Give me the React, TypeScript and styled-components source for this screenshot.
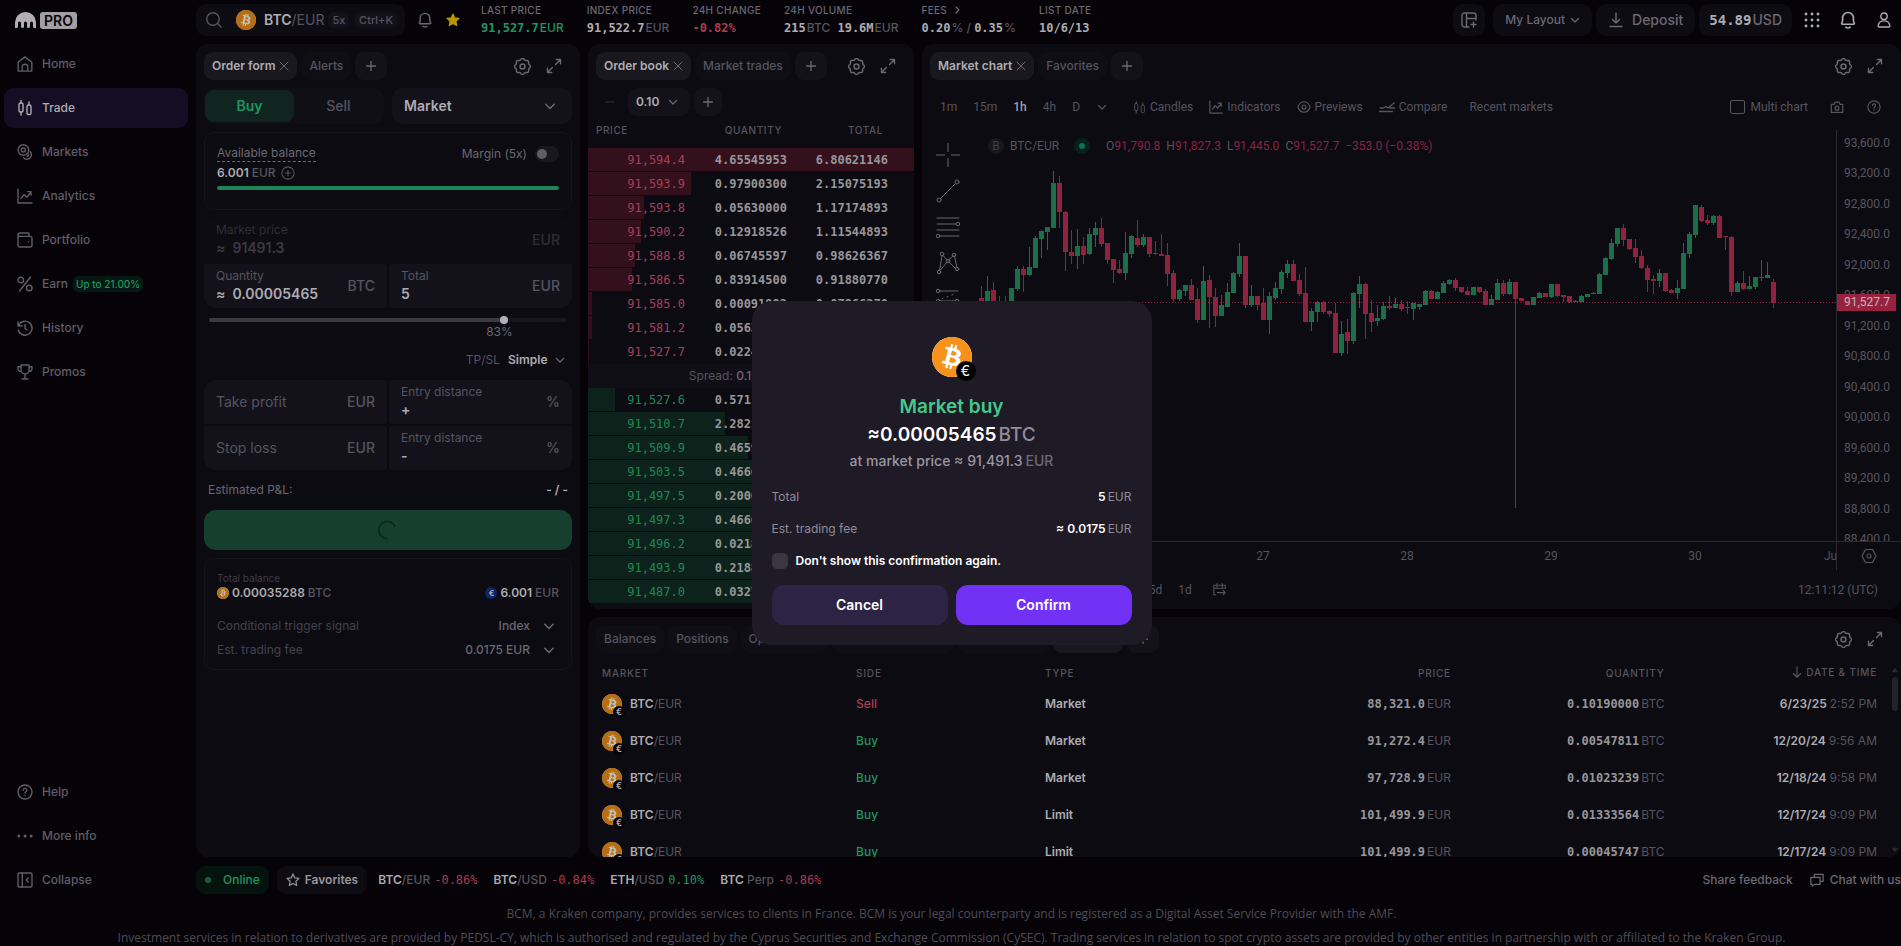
import React, { ReactNode } from 'react';
import styled, { createGlobalStyle, css } from 'styled-components';
import { SiBitcoin } from 'react-icons/si';

const c = {
  page: '#050308',
  panel: '#0c0b11',
  surface: '#13121a',
  raised: '#19181f',
  line: '#15141b',
  bright: '#aeacb1',
  mid: '#6a6873',
  dim: '#56545f',
  faint: '#2f2d36',
  green: '#1f9560',
  red: '#a93d50',
};
const sans = 'Inter, "Liberation Sans", sans-serif';
const mono = '"DejaVu Sans Mono", "Liberation Mono", monospace';
const chartFont = 'Roboto, "Open Sans", sans-serif';

const GlobalStyle = createGlobalStyle`
  *, *::before, *::after { box-sizing: border-box; }
  body { margin: 0; background: ${c.page}; color: ${c.mid}; font: 400 12px/16px ${sans}; overflow: hidden; }
  button, input, select { font: inherit; color: inherit; border: 0; padding: 0; margin: 0; background: none; outline: 0; min-width: 0; }
  a { color: inherit; text-decoration: none; }
  svg { display: block; flex: none; }
`;

/* ---------- icons ---------- */
const Icon = ({ d, size = 16, w = 1.4, vb = 16, children }: { d?: string; size?: number; w?: number; vb?: number; children?: ReactNode }) => (
  <svg width={size} height={size} viewBox={`0 0 ${vb} ${vb}`} fill="none" stroke="currentColor" strokeWidth={w} strokeLinecap="round" strokeLinejoin="round" aria-hidden>
    {d && <path d={d} />}
    {children}
  </svg>
);
const gearPath = Array.from({ length: 96 }, (_, i) => {
  const a = (i / 96) * Math.PI * 2;
  const r = 6.9 + 0.6 * Math.cos(8 * a);
  return `${i ? 'L' : 'M'}${(8 + r * Math.cos(a)).toFixed(2)} ${(8 + r * Math.sin(a)).toFixed(2)}`;
}).join('') + 'Z';
const Gear = () => <Icon d={gearPath} size={17}><circle cx="8" cy="8" r="2.3" /></Icon>;
const Expand = () => <Icon d="M10.3 1.5h4.2v4.2M14.2 1.8 9.6 6.4M5.7 14.5H1.5v-4.2M1.8 14.2l4.6-4.6" />;
const Chevron = ({ size = 10 }: { size?: number }) => <Icon size={size} vb={10} w={1.2} d="M1.5 3.5 5 7l3.5-3.5" />;
const Cross = () => <Icon size={10} vb={10} w={1} d="M1 1l8 8M9 1l-8 8" />;
const Plus = () => <Icon size={10} vb={10} w={1.3} d="M5 .5v9M.5 5h9" />;
const Minus = () => <Icon size={10} vb={10} w={1.2} d="M.5 5h9" />;
const Search = () => <Icon size={18} vb={18} d="M12.6 12.6 16 16"><circle cx="8" cy="8" r="6.2" /></Icon>;
const Bell = ({ size = 16 }: { size?: number }) => <Icon size={size} d="M3 11.8c-.6 0-.9-.6-.6-1.1.5-.9.8-1.9.8-3V6.2a4.8 4.8 0 0 1 9.6 0v1.5c0 1.1.3 2.1.8 3 .3.5 0 1.1-.6 1.1ZM6 14.4c1.2.8 2.8.8 4 0" />;
const StarIcon = ({ filled }: { filled?: boolean }) => (
  <svg width="14" height="14" viewBox="0 0 14 14" aria-hidden fill={filled ? '#b99700' : 'none'} stroke={filled ? '#b99700' : 'currentColor'} strokeWidth="1.2" strokeLinejoin="round">
    <path d="M7 1l1.8 3.9 4.2.5-3.1 2.9.8 4.2L7 10.4l-3.7 2.1.8-4.2L1 5.4l4.2-.5z" />
  </svg>
);
const HelpIcon = ({ size = 16 }: { size?: number }) => <Icon size={size} d="M6.2 6.2a1.8 1.8 0 1 1 2.6 1.6c-.5.3-.8.6-.8 1.2M8 11.3v.1"><circle cx="8" cy="8" r="7" /></Icon>;
const CandleIcon = ({ size = 16, w = 1.4 }: { size?: number; w?: number }) => (
  <Icon size={size} w={w} d="M4 0v3M4 12v3M12 2v2.5"><rect x="2" y="3" width="4" height="9" rx="1.6" /><rect x="10" y="5" width="4" height="9.5" rx="1.6" /></Icon>
);
const ChartIcon = ({ size = 16 }: { size?: number }) => <Icon size={size} d="M1 1v14h14M4 10.5l3-4 2.8 2.7L14 4M10.5 3.6H14v3.5" />;

const navIcons: Record<string, ReactNode> = {
  Home: <Icon d="M1.2 6.3 8 .9l6.8 5.4v8.8H1.2ZM5.2 15V11a2.8 2.8 0 0 1 5.6 0v4" />,
  Trade: <CandleIcon />,
  Markets: <Icon d="M13.2 7.6a4.4 4.4 0 1 1-6.6 6.2"><circle cx="6.4" cy="6" r="5.3" /><circle cx="6.4" cy="6" r="2" /><path d="M11.7 10.2a1.8 1.8 0 0 1-1.6 2" /></Icon>,
  Analytics: <ChartIcon />,
  Portfolio: <Icon d="M1 12.8V3.2C1 2 1.9 1 3.2 1h8.6v3.4M1 4.4h12c1.1 0 2 .9 2 2V13c0 1.1-.9 2-2 2H3a2 2 0 0 1-2-2ZM11.5 9.7v.1" />,
  Earn: <Icon d="M13.5 1 2.5 15"><circle cx="3.8" cy="4" r="2.8" /><circle cx="12.2" cy="12" r="2.8" /></Icon>,
  History: <Icon d="M1 2v4h4M1.4 6A7 7 0 1 1 1.3 10M8 4.5V8.5l2 1.5" />,
  Promos: <Icon d="M4 1h8v5a4 4 0 0 1-8 0ZM4 2.8H1v1.7C1 6.5 2.4 7.5 4.3 7.5M12 2.8h3v1.7c0 2-1.4 3-3.3 3M8 10v4.8M5 15h6" />,
  Help: <HelpIcon />,
  'More info': <Icon d="M1.8 8v0M8 8v0M14.2 8v0" w={3} />,
  Collapse: <Icon d="M5.3 1v14M11.2 6 9.5 8l1.7 2"><rect x="1" y="1" width="14" height="14" rx="1.5" /></Icon>,
};

const CoinWrap = styled.span<{ $size: number; $dim?: boolean }>`
  position: relative; display: block; flex: none;
  width: ${p => p.$size}px; height: ${p => p.$size}px;
  border-radius: 50%; background: ${p => (p.$dim ? '#c3bdb2' : '#fff')};
  color: ${p => (p.$dim ? '#b56e13' : '#f7931a')};
`;
const CoinBadge = styled.span<{ $big?: boolean }>`
  position: absolute; border-radius: 50%; background: #000; text-align: center; font-family: ${sans};
  ${p => (p.$big
    ? css`right: -4px; bottom: -4px; width: 20px; height: 20px; font-size: 14px; line-height: 20px; color: #fff;`
    : css`right: -3px; bottom: -4px; width: 12px; height: 12px; font-size: 9px; line-height: 12px; color: ${c.bright}; background: #050408;`)}
`;
const Coin = ({ size = 20, dim, badge }: { size?: number; dim?: boolean; badge?: boolean }) => (
  <CoinWrap $size={size} $dim={dim}>
    <SiBitcoin size={size} />
    {badge && <CoinBadge $big={size > 30}>€</CoinBadge>}
  </CoinWrap>
);

/* ---------- page frame ---------- */
const Upper = styled.div`display: flex; height: calc(100vh - 44px); min-height: 700px;`;
const Sidebar = styled.nav`width: 196px; flex: none; display: flex; flex-direction: column; padding: 0 8px 2px 4px;`;
const Brand = styled.a`display: flex; align-items: center; gap: 4px; height: 44px; padding: 0 0 4px 11px; color: #b1afb2;`;
const Pro = styled.span`background: #a19fa2; color: #050308; border-radius: 3px; height: 17px; padding: 0 4px; font: 600 14px/17px ${sans};`;
const NavItem = styled.a<{ $active?: boolean }>`
  display: flex; align-items: center; gap: 9px; height: 40px; margin-bottom: 4px; padding-left: 13px;
  border-radius: 10px; font-weight: 500; color: ${p => (p.$active ? c.bright : '#605d69')};
  background: ${p => (p.$active ? '#130e23' : 'transparent')};
  &:last-child { margin-bottom: 0; }
`;
const EarnTag = styled.span`margin-left: -4px; padding: 0 3px; border-radius: 5px; background: #051811; color: ${c.green}; font-size: 10px;`;
const NavSpace = styled.div`flex: 1;`;
const Content = styled.div`flex: 1; min-width: 0; display: flex; flex-direction: column;`;

/* ---------- top bar ---------- */
const TopBar = styled.header`display: flex; height: 44px; padding: 2px 9px 0 0; align-items: flex-start;`;
const PairSearch = styled.button`
  display: flex; align-items: center; height: 32px; margin-top: 2px; padding: 0 8px 0 9px; border-radius: 10px; background: #0e0c13; width: 209px; color: ${c.dim};
  > svg { margin-right: 13px; }
`;
const PairName = styled.span`margin: 0 4px 0 8px; font-size: 14px; color: ${c.dim}; b { font-weight: 600; color: ${c.bright}; }`;
const Chip = styled.span`border-radius: 5px; background: ${c.surface}; padding: 0 4px; font-size: 11px; font-weight: 500; &:last-child { margin-left: auto; }`;
const PlainButton = styled.button<{ $bright?: boolean }>`display: flex; align-items: center; justify-content: center; color: ${p => (p.$bright ? c.bright : c.mid)}; cursor: pointer;`;
const PairActions = styled.div`display: flex; gap: 13px; padding: 10px 21px 0 12px;`;
const Stats = styled.dl`display: flex; gap: 23px; margin: 0; flex: 1;`;
const Stat = styled.div``;
const StatLabel = styled.dt`display: flex; align-items: center; gap: 6px; font-size: 10px; font-weight: 500; color: ${c.mid}; letter-spacing: 0.03em; text-transform: uppercase; white-space: nowrap;`;
const StatValue = styled.dd<{ $tone?: string }>`
  margin: 2px 0 0; white-space: nowrap; font: 700 12px/16px ${mono}; color: ${p => p.$tone || c.bright};
  small { font: 500 12px/16px ${sans}; color: ${p => p.$tone || c.dim}; margin-left: 1px; }
`;
const TopActions = styled.div`display: flex; gap: 4px; margin-top: 2px;`;
const TopButton = styled.button<{ $kind?: 'icon' | 'large' | 'balance' }>`
  display: flex; align-items: center; justify-content: center; gap: ${p => (p.$kind === 'large' ? 8 : 5)}px; height: 32px; padding: 0 12px; border-radius: 10px; background: #0e0c13;
  font-weight: 500; font-size: ${p => (p.$kind === 'large' ? 14 : 12)}px; color: ${c.mid}; white-space: nowrap;
  ${p => p.$kind === 'icon' && css`width: 32px; padding: 0; margin-right: 4px;`}
  ${p => p.$kind === 'balance' && css`padding: 0 10px;`}
  b { font: 700 14px/16px ${mono}; color: ${c.bright}; }
  small { font: 500 14px/16px ${sans}; margin-left: -4px; }
`;
const TopIcons = styled.div`display: flex; gap: 19px; padding: 0 0 0 12px; align-items: center; height: 36px;`;

/* ---------- panels ---------- */
const Workspace = styled.main`
  flex: 1; min-height: 0; display: grid; gap: 8px;
  grid-template-columns: 384px 326px minmax(0, 1fr); grid-template-rows: minmax(0, 1fr) 240px;
`;
const Panel = styled.section<{ $area?: 'form' | 'history' }>`
  background: ${c.panel}; border-radius: 12px; overflow: hidden; display: flex; flex-direction: column; min-width: 0; min-height: 0;
  ${p => p.$area === 'form' && css`grid-row: 1 / 3;`}
  ${p => p.$area === 'history' && css`grid-column: 2 / 4;`}
`;
const TabBar = styled.div`display: flex; gap: 4px; padding: 8px 8px 0; flex: none;`;
const Tab = styled.button<{ $active?: boolean }>`
  display: flex; align-items: center; gap: 4px; height: 28px; padding: 0 8px; border-radius: 9px; white-space: nowrap;
  background: ${p => (p.$active ? c.raised : '#0f0e15')}; color: ${p => (p.$active ? c.bright : c.dim)}; font-weight: ${p => (p.$active ? 600 : 500)};
  svg { color: ${c.mid}; }
`;
const AddTab = styled(Tab)`width: 32px; justify-content: center; background: ${c.surface};`;
const PanelTools = styled.div`display: flex; gap: 15px; margin-left: auto; padding-right: 10px; align-items: center; color: ${c.mid};`;
const Tabs = ({ items, active }: { items: string[]; active: string }) => (
  <TabBar>
    {items.map(t => <Tab key={t} $active={t === active}>{t}{t === active && <Cross />}</Tab>)}
    <AddTab aria-label="Add tab"><Plus /></AddTab>
    <PanelTools>
      <PlainButton aria-label="Panel settings"><Gear /></PlainButton>
      <PlainButton aria-label="Expand panel"><Expand /></PlainButton>
    </PanelTools>
  </TabBar>
);

/* ---------- order form ---------- */
const Form = styled.form`display: flex; flex-direction: column; padding: 8px 8px 0;`;
const SideRow = styled.div`display: grid; grid-template-columns: 1fr 1fr; gap: 8px;`;
const SideSwitch = styled.div`display: grid; grid-template-columns: 1fr 1fr; height: 36px; padding: 2px 1px; border-radius: 10px; background: #100f16;`;
const SideButton = styled.button<{ $on?: boolean }>`
  border-radius: 9px; font-size: 14px; font-weight: ${p => (p.$on ? 600 : 500)};
  background: ${p => (p.$on ? '#10251f' : 'transparent')}; color: ${p => (p.$on ? c.green : c.dim)};
`;
const SelectWrap = styled.label<{ $kind?: 'large' | 'small' | 'plain' | 'quiet' }>`
  display: flex; align-items: center; position: relative; color: ${c.mid};
  select { appearance: none; cursor: pointer; }
  option { background: ${c.surface}; color: ${c.bright}; }
  ${p => p.$kind === 'large' && css`height: 36px; border-radius: 10px; background: ${c.surface}; padding: 0 16px 0 12px; select { flex: 1; font-size: 14px; font-weight: 600; color: ${c.bright}; }`}
  ${p => p.$kind === 'small' && css`height: 28px; border-radius: 9px; background: ${c.surface}; padding: 0 12px 0 8px; gap: 8px; select { font-weight: 600; color: ${c.bright}; }`}
  ${p => p.$kind === 'plain' && css`gap: 7px; select { font-weight: 600; color: ${c.bright}; }`}
  ${p => p.$kind === 'quiet' && css`gap: 13px; padding-right: 4px; select { font-weight: 500; color: ${c.mid}; text-align: right; }`}
`;
const Hidden = styled.span`position: absolute; width: 1px; height: 1px; overflow: hidden; clip-path: inset(50%);`;
const BalanceBox = styled.div`margin-top: 8px; height: 78px; border: 1px solid ${c.line}; border-radius: 10px; padding: 12px 12px 0;`;
const Row = styled.div<{ $top?: number }>`display: flex; align-items: center; justify-content: space-between; margin-top: ${p => p.$top || 0}px;`;
const Dashed = styled.span`border-bottom: 1px dashed ${c.mid};`;
const Amount = styled.span`
  display: flex; align-items: center; gap: 3px; color: ${c.dim}; font-weight: 500;
  b { font-weight: 600; color: ${c.bright}; }
  > svg { margin-left: 2px; }
`;
const ToggleLabel = styled.label`display: flex; align-items: center; gap: 8px;`;
const Toggle = styled.input`
  appearance: none; width: 24px; height: 16px; border-radius: 8px; background: ${c.raised};
  &::before { content: ''; display: block; width: 10px; height: 10px; margin: 3px 0 0 2px; border-radius: 50%; background: #605e66; }
`;
const Meter = styled.div`height: 4px; margin-top: 5px; border-radius: 2px; background: #1f8456;`;
const Fields = styled.div<{ $top: number }>`margin-top: ${p => p.$top}px; display: grid; grid-template-columns: 1fr 1fr; gap: 2px; border-radius: 12px; overflow: hidden;`;
const FieldBox = styled.label<{ $wide?: boolean; $muted?: boolean }>`
  display: grid; grid-template-columns: minmax(0, 1fr) auto; grid-template-rows: 16px 20px; align-items: center; height: 44px; padding: 4px 12px; border-radius: 3px;
  background: ${p => (p.$muted ? '#0d0c12' : c.surface)}; color: ${p => (p.$muted ? c.faint : c.dim)};
  ${p => p.$wide && css`grid-column: 1 / 3;`}
`;
const FieldUnit = styled.span`grid-column: 2; grid-row: 1 / 3; font-size: 14px; font-weight: 500;`;
const FieldValue = styled.span<{ $muted?: boolean; $tall?: boolean }>`
  display: flex; gap: 7px; font-size: 14px; font-weight: 600; color: ${p => (p.$muted ? '#3b3941' : c.bright)}; ${p => p.$tall && css`grid-row: 1 / 3;`}
  input { width: 100%; }
  input::placeholder { color: ${c.dim}; font-weight: 400; opacity: 1; }
`;
const Field = ({ label, value, unit, approx, wide, muted, bare }: { label: string; value?: string; unit: string; approx?: boolean; wide?: boolean; muted?: boolean; bare?: boolean }) => (
  <FieldBox $wide={wide} $muted={muted}>
    {!bare && <span>{label}</span>}
    <FieldValue $muted={muted} $tall={bare}>
      {approx && <span>≈</span>}
      <input defaultValue={value} placeholder={bare ? label : undefined} aria-label={bare ? label : undefined} disabled={muted} />
    </FieldValue>
    <FieldUnit>{unit}</FieldUnit>
  </FieldBox>
);
const SliderWrap = styled.div`margin: 10px 5px 0;`;
const Slider = styled.input`
  appearance: none; display: block; width: 100%; height: 4px; border-radius: 2px;
  background: linear-gradient(to right, #3b3943 83%, #17161d 83%);
  &::-webkit-slider-thumb { appearance: none; width: 8px; height: 8px; border-radius: 50%; background: #b2b1b5; }
`;
const SliderValue = styled.output`display: block; margin: 2px 0 0 calc(83% - 20px);`;
const TpRow = styled.div`display: flex; justify-content: flex-end; gap: 8px; padding: 0 7px; margin-top: 12px; color: ${c.dim};`;
const PnlRow = styled(Row)`padding: 0 4px; b { color: ${c.bright}; font-weight: 600; }`;
const Submit = styled.button`margin-top: 12px; height: 40px; border-radius: 12px; background: #15402f; display: flex; align-items: center; justify-content: center; color: #0a2418;`;
const SummaryBox = styled.div`margin-top: 8px; border: 1px solid ${c.line}; border-radius: 10px; padding: 12px 12px 11px;`;
const Tiny = styled.div`font-size: 10px; line-height: 14px; color: #3f3d47;`;
const EuroDot = styled.span`width: 12px; height: 12px; border-radius: 50%; background: #0a2568; color: ${c.bright}; font: 700 8px/12px ${sans}; text-align: center;`;
const SumLabel = styled.span`color: #44424d;`;

function OrderForm() {
  return (
    <Panel $area="form">
      <Tabs items={['Order form', 'Alerts']} active="Order form" />
      <Form onSubmit={e => e.preventDefault()}>
        <SideRow>
          <SideSwitch>
            <SideButton type="button" $on>Buy</SideButton>
            <SideButton type="button">Sell</SideButton>
          </SideSwitch>
          <SelectWrap $kind="large"><Hidden>Order type</Hidden><select><option>Market</option></select><Chevron size={12} /></SelectWrap>
        </SideRow>
        <BalanceBox>
          <Row>
            <Dashed>Available balance</Dashed>
            <ToggleLabel>Margin (5x)<Toggle type="checkbox" /></ToggleLabel>
          </Row>
          <Row $top={3}>
            <Amount><b>6.001</b>EUR<Icon size={14} w={1.2} d="M8 5v6M5 8h6"><circle cx="8" cy="8" r="7" /></Icon></Amount>
          </Row>
          <Meter />
        </BalanceBox>
        <Fields $top={8}>
          <Field label="Market price" value="91491.3" unit="EUR" approx wide muted />
          <Field label="Quantity" value="0.00005465" unit="BTC" approx />
          <Field label="Total" value="5" unit="EUR" />
        </Fields>
        <SliderWrap>
          <Slider type="range" min={0} max={100} defaultValue={83} aria-label="Share of balance" />
          <SliderValue>83%</SliderValue>
        </SliderWrap>
        <TpRow>TP/SL<SelectWrap $kind="plain"><Hidden>TP/SL mode</Hidden><select><option>Simple</option></select><Chevron /></SelectWrap></TpRow>
        <Fields $top={12}>
          <Field label="Take profit" unit="EUR" bare />
          <Field label="Entry distance" value="+" unit="%" />
          <Field label="Stop loss" unit="EUR" bare />
          <Field label="Entry distance" value="-" unit="%" />
        </Fields>
        <PnlRow $top={12}><span>Estimated P&amp;L:</span><b>- / -</b></PnlRow>
        <Submit type="submit" aria-label="Submitting order"><Icon size={20} vb={20} w={1.5} d="M17 6.5A8.5 8.5 0 1 0 9 18.4" /></Submit>
        <SummaryBox>
          <Tiny>Total balance</Tiny>
          <Row>
            <Amount><Coin size={12} dim /><b>0.00035288</b>BTC</Amount>
            <Amount><EuroDot>€</EuroDot><b>6.001</b>EUR</Amount>
          </Row>
          <Row $top={17}><SumLabel>Conditional trigger signal</SumLabel><SelectWrap $kind="quiet"><Hidden>Trigger signal</Hidden><select><option>Index</option></select><Chevron size={12} /></SelectWrap></Row>
          <Row $top={8}><SumLabel>Est. trading fee</SumLabel><SelectWrap $kind="quiet"><Hidden>Trading fee</Hidden><select><option>0.0175 EUR</option></select><Chevron size={12} /></SelectWrap></Row>
        </SummaryBox>
      </Form>
    </Panel>
  );
}

/* ---------- order book ---------- */
const BookTools = styled.div`display: flex; gap: 4px; padding: 8px 8px 0;`;
const StepButton = styled.button<{ $off?: boolean }>`width: 28px; height: 28px; border-radius: 9px; display: flex; align-items: center; justify-content: center; background: ${p => (p.$off ? 'transparent' : c.surface)}; color: ${p => (p.$off ? '#33313a' : c.mid)};`;
const BookTable = styled.table`
  width: 100%; border-collapse: collapse; table-layout: fixed;
  th { height: 32px; padding: 0 5px 4px 0; font-size: 10px; font-weight: 500; letter-spacing: 0.06em; color: ${c.dim}; text-align: right; }
  th:first-child { text-align: left; padding-left: 8px; }
  td { height: 24px; padding: 0; text-align: right; font: 700 12px/24px ${mono}; color: #98969a; }
`;
const BookRow = styled.tr<{ $tone: 'ask' | 'bid' }>`
  background-repeat: no-repeat;
  td:first-child { font-weight: 400; color: ${p => (p.$tone === 'ask' ? '#a83f59' : '#1e8858')}; }
`;
const SpreadRow = styled.tr`td { text-align: center; font: 400 12px/24px ${sans}; color: ${c.dim}; background: #100f17; b { font-weight: 500; color: ${c.mid}; } }`;
const asks: [string, string, string, number][] = [
  ['91,594.4', '4.65545953', '6.80621146', 100], ['91,593.9', '0.97900300', '2.15075193', 31.6], ['91,593.8', '0.05630000', '1.17174893', 17.3],
  ['91,590.2', '0.12918526', '1.11544893', 16.4], ['91,588.8', '0.06745597', '0.98626367', 14.5], ['91,586.5', '0.83914500', '0.91880770', 13.5],
  ['91,585.0', '0.00091992', '0.07966270', 1.2], ['91,581.2', '0.05630000', '0.07874278', 1.2], ['91,527.7', '0.02244278', '0.02244278', 0.3],
];
const bids: [string, string, string, number][] = [
  ['91,527.6', '0.57112000', '0.57112000', 8.3], ['91,510.7', '2.28210000', '2.85322000', 42], ['91,509.9', '0.46590000', '3.31912000', 49],
  ['91,503.5', '0.46660000', '3.78572000', 56], ['91,497.5', '0.20000000', '3.98572000', 59], ['91,497.3', '0.46660000', '4.45232000', 66],
  ['91,496.2', '0.02180000', '4.47412000', 66], ['91,493.9', '0.21880000', '4.69292000', 69], ['91,487.0', '0.03270000', '4.72562000', 70],
];
const depth = (color: string, pct: number) => ({ backgroundImage: `linear-gradient(${color}, ${color})`, backgroundSize: `${pct}% 23px` });

function OrderBook() {
  const rows = (list: typeof asks, tone: 'ask' | 'bid', color: string) => list.map(([p, q, t, pct]) => (
    <BookRow key={p} $tone={tone} style={depth(color, pct)}><td>{p}</td><td>{q}</td><td>{t}</td><td /></BookRow>
  ));
  return (
    <Panel>
      <Tabs items={['Order book', 'Market trades']} active="Order book" />
      <BookTools>
        <StepButton $off aria-label="Decrease grouping"><Minus /></StepButton>
        <SelectWrap $kind="small"><Hidden>Grouping</Hidden><select><option>0.10</option></select><Chevron /></SelectWrap>
        <StepButton aria-label="Increase grouping"><Plus /></StepButton>
      </BookTools>
      <BookTable>
        <colgroup><col width="97" /><col width="102" /><col width="101" /><col /></colgroup>
        <thead><tr><th>PRICE</th><th>QUANTITY</th><th>TOTAL</th><th aria-hidden /></tr></thead>
        <tbody>
          {rows(asks, 'ask', '#33101b')}
          <SpreadRow><td colSpan={4}>Spread: <b>0.1</b> (0.0001%)</td></SpreadRow>
          {rows(bids, 'bid', '#0c221b')}
        </tbody>
      </BookTable>
    </Panel>
  );
}

/* ---------- market chart ---------- */
const ChartBar = styled.div`display: flex; align-items: center; height: 50px; padding: 4px 12px 0 10px; font: 400 12px/16px ${chartFont}; color: ${c.dim};`;
const Tool = styled.button<{ $on?: boolean }>`
  display: flex; align-items: center; gap: 4px; height: 28px; padding: 0 8px; white-space: nowrap; color: ${p => (p.$on ? '#a19fa4' : c.dim)}; font-weight: ${p => (p.$on ? 500 : 400)};
`;
const BarGap = styled.span<{ $w: number }>`width: ${p => p.$w}px;`;
const Spring = styled.span`flex: 1;`;
const CheckLabel = styled.label`display: flex; align-items: center; gap: 5px; margin-right: 14px;`;
const BoxCheck = styled.input`appearance: none; width: 15px; height: 14px; border: 1px solid ${c.dim}; border-radius: 2px;`;
const ChartBody = styled.div`flex: 1; min-height: 0; display: grid; grid-template-columns: 52px minmax(0, 1fr) 65px; grid-template-rows: minmax(0, 1fr) 28px 39px; font: 400 12px/16px ${chartFont}; color: ${c.dim};`;
const DrawTools = styled.div`grid-row: 1 / 3; display: flex; flex-direction: column; align-items: center; gap: 12px; padding-top: 13px; color: #6b696f; overflow: hidden;`;
const Plot = styled.div`position: relative; overflow: hidden; border-bottom: 1px solid #2b2a30; svg { width: 100%; height: 100%; }`;
const Legend = styled.div`position: absolute; top: 6px; left: 14px; display: flex; align-items: center; gap: 6px; height: 20px; white-space: nowrap; i { font-style: normal; color: #8b2141; }`;
const SymbolDot = styled.span`width: 16px; height: 16px; border-radius: 50%; background: #18171c; color: #403f45; text-align: center;`;
const LiveDot = styled.span`width: 16px; height: 16px; margin: 0 10px 0 9px; border: 5px solid #06201a; border-radius: 50%; background: #08734f;`;
const Ohlc = styled.span`display: flex; gap: 6px;`;
const Axis = styled.div`position: relative; border-left: 1px solid #2b2a30; border-bottom: 1px solid #2b2a30; overflow: hidden; padding: 5px 0 0 7px;`;
const AxisLabel = styled.div`height: 30px; &:nth-child(even) { height: 31px; }`;
const LastTag = styled.div`position: absolute; left: -1px; top: 164px; width: 60px; height: 17px; padding-left: 8px; background: #97223f; color: #c3b6bb; line-height: 17px;`;
const TimeAxis = styled.div`overflow: hidden; display: flex; justify-content: flex-end; padding-top: 6px;`;
const DayLabel = styled.span`width: 144px; flex: none; text-align: center; &:last-child { width: 69px; padding-left: 57px; text-align: left; }`;
const AxisCorner = styled.div`border-left: 1px solid #2b2a30; display: flex; align-items: center; justify-content: center;`;
const RangeBar = styled.div`grid-column: 1 / 4; display: flex; align-items: center; justify-content: flex-end; padding: 0 23px 0 8px;`;
const Ranges = styled.div`display: flex; align-items: center; flex: 1; padding-left: 54px;`;

/* one entry per hourly candle: tone, high, low, body top, body bottom (thirds of a pixel) */
const candles = `R498,560,534,560 G468,560,513,550 R487,560,510,550 R528,560,548,560 R528,560,550,560 G504,550,504,550 G438,512,447,507 R438,516,447,465 G381,468,441,465 G349,444,354,444 G330,414,333,357 G321,390,321,336 G153,324,189,324 R168,324,189,276 R273,453,276,396 R330,432,396,408 G327,447,378,408 R351,432,378,405 G324,405,342,402 G306,381,324,345 R294,381,324,372 R369,432,369,420 R417,489,417,450 R420,462,447,459 G336,480,399,459 G345,414,348,402 R300,381,354,375 G342,381,351,375 R351,411,351,402 R363,405,399,402 R342,408,402,408 R369,498,405,462 R450,546,459,537 G507,543,510,537 G495,528,495,513 R477,540,495,540 R504,609,537,600 G438,600,483,600 R465,624,480,531 R504,621,531,588 G525,588,555,588 G489,561,516,561 G456,519,459,519 G369,471,408,462 R408,564,408,555 G495,561,528,555 R528,570,528,555 R504,600,549,600 G516,642,528,600 G486,540,504,534 G450,522,456,507 G420,474,432,459 R420,483,432,483 R462,528,480,522 R441,606,519,606 G564,633,573,606 G543,606,546,576 R543,582,546,576 R570,591,573,582 R549,699,579,699 G603,708,642,699 R597,702,636,663 G516,672,519,663 G468,564,492,522 R489,657,492,582 R540,636,579,606 G555,618,594,603 G546,600,558,597 R528,570,558,564 G534,564,552,564 R540,573,552,567 R543,582,561,564 G549,600,549,567 G552,570,552,561 G510,555,513,555 R510,537,513,537 G513,537,516,537 G483,519,489,519 G477,495,480,492 R474,513,480,504 R501,519,501,516 R501,525,513,525 G501,525,501,525 R501,519,501,516 R507,555,513,555 G525,555,537,555 G477,540,489,540 R480,528,489,522 G477,525,486,522 R486,1164,486,537 R534,543,534,543 R543,555,543,555 G531,555,531,555 G516,534,519,534 R519,531,519,531 G492,534,492,531 R492,531,492,528 R525,546,525,531 R528,549,528,546 G540,546,543,546 G525,546,528,546 G522,531,522,531 G516,522,519,522 G459,522,462,522 G411,465,414,465 G357,420,369,417 G324,381,324,372 R312,378,324,360 R357,390,357,387 R357,429,384,411 R390,447,408,444 R435,516,444,480 R465,522,477,483 G447,501,459,483 R459,516,459,513 R507,519,510,519 G480,537,504,519 G369,507,399,507 G336,414,342,402 G255,354,255,345 R255,306,261,303 R285,315,300,309 G285,315,288,309 R285,354,288,354 R348,390,348,351 R348,528,351,516 G483,516,489,516 R453,510,489,507 G468,507,498,507 G471,507,471,501 G420,483,471,474 G426,474,465,474 R477,564,486,549`
  .split(' ').map(s => ({ up: s[0] === 'G', v: s.slice(1).split(',').map(n => Math.round(Number(n) / 3) - 10) }));

const prices = ['93,600.0', '93,200.0', '92,800.0', '92,400.0', '92,000.0', '91,600.0', '91,200.0', '90,800.0', '90,400.0', '90,000.0', '89,600.0', '89,200.0', '88,800.0', '88,400.0'];

function MarketChart() {
  return (
    <Panel>
      <Tabs items={['Market chart', 'Favorites']} active="Market chart" />
      <ChartBar>
        {['1m', '15m', '1h', '4h', 'D'].map(t => <Tool key={t} $on={t === '1h'}>{t}</Tool>)}
        <BarGap $w={1} />
        <Tool aria-label="More intervals"><Chevron /></Tool>
        <BarGap $w={10} />
        <Tool><CandleIcon size={13} w={1.1} />Candles</Tool>
        <Tool><ChartIcon size={14} />Indicators</Tool>
        <Tool><Icon size={14} d="M1 8c3-8 11-8 14 0-3 8-11 8-14 0Z"><circle cx="8" cy="8" r="2.3" /></Icon>Previews</Tool>
        <Tool><Icon size={16} d="M.5 12.5h13M1 9h3.5L7 7.5l2 1.5L15 4M11 9h4.5" />Compare</Tool>
        <BarGap $w={6} />
        <Tool>Recent markets</Tool>
        <Spring />
        <CheckLabel><BoxCheck type="checkbox" />Multi chart</CheckLabel>
        <Tool aria-label="Take snapshot"><Icon size={14} d="M1.5 5h3l1.2-2.5h4.6L11.5 5h3v9.2h-13Z"><circle cx="8" cy="9.3" r="2.2" /></Icon></Tool>
        <BarGap $w={7} />
        <Tool aria-label="Chart help"><HelpIcon size={14} /></Tool>
      </ChartBar>
      <ChartBody>
        <DrawTools>
          <Icon size={24} vb={24} w={1} d="M12 .5v8M12 15.5v8M.5 12h8M15.5 12h8" />
          <Icon size={24} vb={24} w={1} d="M4.5 19.5 19.5 4.5"><circle cx="3" cy="21" r="2" /><circle cx="21" cy="3" r="2" /></Icon>
          <Icon size={24} vb={24} w={1} d="M1 3h22M1 9h19M1 15h22M4 21h19"><circle cx="22" cy="9" r="1.8" /><circle cx="2" cy="21" r="1.8" /></Icon>
          <Icon size={24} vb={24} w={1} d="M3.5 19.5 6 4.5M7 4.5l4 4.5M12.5 9 17 5M18.5 5l2.500 12M4.500 19 11 11M13 11l7 7"><circle cx="3" cy="21" r="1.8" /><circle cx="6" cy="3" r="1.8" /><circle cx="12" cy="10" r="1.8" /><circle cx="18" cy="4" r="1.8" /><circle cx="21" cy="18" r="1.8" /></Icon>
          <Icon size={24} vb={24} w={1} d="M4 4h18M4 14h15M6 12l1-1M11 10l1-.5M16 8l1-.5"><circle cx="2" cy="4" r="1.8" /><circle cx="2" cy="14" r="1.8" /><circle cx="21" cy="14" r="1.8" /></Icon>
        </DrawTools>
        <Plot>
          <svg viewBox="0 0 862 412" preserveAspectRatio="xMaxYMin slice" shapeRendering="crispEdges" aria-label="BTC/EUR hourly candles">
            {candles.map(({ up, v: [hi, lo, top, bot] }, i) => (
              <g key={i} fill={up ? '#1b6e47' : '#8f233d'}>
                <rect x={7 + 6 * i} y={hi} width={1} height={lo - hi} />
                <rect x={5 + 6 * i} y={top} width={5} height={Math.max(bot - top, 1)} />
              </g>
            ))}
            <path d="M0 172.5H862" stroke="#8f233d" strokeWidth="1" strokeDasharray="1 2" />
          </svg>
          <Legend>
            <SymbolDot>B</SymbolDot>BTC/EUR<LiveDot />
            <Ohlc><span>O<i>91,790.8</i></span><span>H<i>91,827.3</i></span><span>L<i>91,445.0</i></span><span>C<i>91,527.7</i></span><i>−353.0 (−0.38%)</i></Ohlc>
          </Legend>
        </Plot>
        <Axis>
          {prices.map(p => <AxisLabel key={p}>{p}</AxisLabel>)}
          <LastTag>91,527.7</LastTag>
        </Axis>
        <TimeAxis>{['26', '27', '28', '29', '30', 'Jul'].map(d => <DayLabel key={d}>{d}</DayLabel>)}</TimeAxis>
        <AxisCorner><Icon w={1.2} d="M4.5 1.5h7L15 8l-3.5 6.5h-7L1 8Z"><circle cx="8" cy="8" r="2" /></Icon></AxisCorner>
        <RangeBar>
          <Ranges>
            {['5y', '1y', '6m', '3m', '1m', '5d', '1d'].map(r => <Tool key={r}>{r}</Tool>)}
            <BarGap $w={5} />
            <Tool aria-label="Go to date"><Icon size={14} w={1.2} d="M1 8V2.5h13V6M1 6h13M4.500.5v4M10.500.5v4M5 11h9M11.500 8.500 14 11l-2.500 2.500M1 8v5.500h2" /></Tool>
          </Ranges>
          12:11:12 (UTC)
        </RangeBar>
      </ChartBody>
    </Panel>
  );
}

/* ---------- trade history ---------- */
const Scroll = styled.div`position: relative; flex: 1; min-height: 0; overflow: hidden; padding: 8px 10px 0 0;`;
const HistoryTable = styled.table`
  width: 100%; border-collapse: collapse; table-layout: fixed; font-weight: 600; color: ${c.bright};
  th { height: 24px; padding: 0 14px; text-align: left; font-size: 10px; font-weight: 500; letter-spacing: 0.08em; color: ${c.dim}; }
  td { height: 37px; padding: 0 14px; text-align: left; }
  th:nth-child(n + 4), td:nth-child(n + 4) { text-align: right; }
  small { font-size: 12px; font-weight: 400; color: ${c.dim}; }
`;
const Num = styled.span`font: 700 12px/16px ${mono}; color: #98969a; margin-right: 2px;`;
const Market = styled.span`display: flex; align-items: center; gap: 8px;`;
const Side = styled.span<{ $buy: boolean }>`font-weight: 500; color: ${p => (p.$buy ? c.green : c.red)};`;
const SortHead = styled.span`display: inline-flex; align-items: center; gap: 3px;`;
const Scroller = styled.div`position: absolute; right: 3px; top: 14px; bottom: 4px; width: 7px; display: flex; flex-direction: column; justify-content: space-between; align-items: center; color: #2b2a31;`;
const Thumb = styled.span`width: 6px; height: 34px; margin: 4px 0 auto; border-radius: 3px; background: #232229;`;
const trades: [string, string, string, string, string, string][] = [
  ['Sell', 'Market', '88,321.0', '0.10190000', '6/23/25', '2:52 PM'],
  ['Buy', 'Market', '91,272.4', '0.00547811', '12/20/24', '9:56 AM'],
  ['Buy', 'Market', '97,728.9', '0.01023239', '12/18/24', '9:58 PM'],
  ['Buy', 'Limit', '101,499.9', '0.01333564', '12/17/24', '9:09 PM'],
  ['Buy', 'Limit', '101,499.9', '0.00045747', '12/17/24', '9:09 PM'],
];

function History() {
  return (
    <Panel $area="history">
      <Tabs items={['Balances', 'Positions', 'Open orders', 'Conditional orders', 'Order history', 'Trades']} active="Trades" />
      <Scroll>
        <HistoryTable>
          <colgroup><col width="19.5%" /><col width="14.5%" /><col width="14.5%" /><col /><col width="16.4%" /><col width="16.3%" /></colgroup>
          <thead><tr>
            <th>MARKET</th><th>SIDE</th><th>TYPE</th><th>PRICE</th><th>QUANTITY</th>
            <th><SortHead><Icon size={12} w={1.5} d="M8 1v14M3 10l5 5 5-5" />DATE &amp; TIME</SortHead></th>
          </tr></thead>
          <tbody>
            {trades.map(([side, type, price, qty, date, time], i) => (
              <tr key={i}>
                <td><Market><Coin dim badge /><span>BTC<small>/EUR</small></span></Market></td>
                <td><Side $buy={side === 'Buy'}>{side}</Side></td>
                <td>{type}</td>
                <td><Num>{price}</Num><small>EUR</small></td>
                <td><Num>{qty}</Num><small>BTC</small></td>
                <td>{date} <small>{time}</small></td>
              </tr>
            ))}
          </tbody>
        </HistoryTable>
        <Scroller>
          <Icon size={6} vb={6} d="M1 4.5 3 2l2 2.5Z" /><Thumb /><Icon size={6} vb={6} d="M1 1.5 3 4l2-2.5Z" />
        </Scroller>
      </Scroll>
    </Panel>
  );
}

/* ---------- footer ---------- */
const TickerBar = styled.div`display: flex; align-items: center; gap: 16px; height: 45px; font-weight: 500; white-space: nowrap; overflow: hidden;`;
const Pills = styled.div`display: flex; gap: 8px; margin-right: -5px;`;
const Pill = styled.button<{ $green?: boolean }>`
  display: flex; align-items: center; gap: ${p => (p.$green ? 12 : 5)}px; height: 28px; padding: 0 9px; border-radius: 9px;
  font-weight: ${p => (p.$green ? 500 : 600)}; background: ${p => (p.$green ? '#05130f' : '#0e0c13')}; color: ${p => (p.$green ? c.green : '#98969c')};
`;
const Dot = styled.span`width: 6px; height: 6px; border-radius: 50%; background: #1d5a40;`;
const Ticker = styled.a<{ $up?: boolean }>`
  color: ${c.dim}; b { font-weight: 600; color: ${c.bright}; }
  span { font: 400 12px/16px ${mono}; margin-left: 4px; color: ${p => (p.$up ? c.green : c.red)}; }
`;
const FooterLink = styled.a`display: flex; align-items: center; gap: 6px; color: ${c.mid};`;
const FooterLinks = styled.div`margin-left: auto; display: flex; gap: 17px;`;
const Legal = styled.footer`text-align: center; white-space: nowrap; padding-left: 2px; font: 400 12px/24px "Open Sans", ${sans}; color: #4e4c57; p { margin: 0; }`;

/* ---------- confirmation dialog ---------- */
const Backdrop = styled.div`position: fixed; inset: 0; display: flex; align-items: center; justify-content: center; padding-left: 2px;`;
const Dialog = styled.div`width: 400px; padding: 36px 20px 20px; border-radius: 20px; background: #1e1a26; display: flex; flex-direction: column; align-items: center; color: #8f8b99;`;
const DialogTitle = styled.h2`margin: 16px 0 0; font: 600 19px/28px ${sans}; color: #43c98a;`;
const DialogAmount = styled.div`display: flex; gap: 2px; font: 500 19px/28px ${sans}; color: #8f8b99; b { font-weight: 600; color: #fff; }`;
const DialogPrice = styled.div`display: flex; gap: 3px; margin-bottom: 8px; font: 500 14px/24px ${sans}; color: #9a97a3; small { font-size: 14px; color: #6d6979; }`;
const DialogRow = styled.div`align-self: stretch; display: flex; align-items: center; justify-content: space-between; height: 32px;`;
const DialogValue = styled.span`display: flex; gap: 2px; b { color: #fff; font-weight: 600; }`;
const DialogCheck = styled.label`align-self: stretch; display: flex; align-items: center; gap: 8px; height: 32px; font-weight: 600; color: #fff;`;
const Check = styled.input`appearance: none; width: 16px; height: 16px; border-radius: 5px; background: #3a3742;`;
const DialogActions = styled.div`align-self: stretch; display: grid; grid-template-columns: 1fr 1fr; gap: 8px; margin-top: 8px;`;
const DialogButton = styled.button<{ $primary?: boolean }>`height: 40px; border-radius: 12px; font-size: 14px; font-weight: 600; color: #fff; background: ${p => (p.$primary ? '#7132f5' : '#2d2345')};`;

const NavLink = ({ name, active }: { name: string; active?: boolean }) => (
  <NavItem href="#" $active={active}>{navIcons[name]}{name}{name === 'Earn' && <EarnTag>Up to 21.00%</EarnTag>}</NavItem>
);

export default function App() {
  return (
    <>
      <GlobalStyle />
      <Upper>
        <Sidebar>
          <Brand href="#" aria-label="Kraken Pro">
            <svg width="21" height="16" viewBox="0 0 21 16" fill="currentColor" aria-hidden>
              <path d="M0 16V10.5a10.5 10.5 0 0 1 21 0V16h-1.5a1.5 1.5 0 0 1-1.5-1.5V11a1.5 1.5 0 0 0-3 0v3.5a1.5 1.5 0 0 1-3 0V11a1.5 1.5 0 0 0-3 0v3.5a1.5 1.5 0 0 1-3 0V11a1.5 1.5 0 0 0-3 0v3.5A1.5 1.5 0 0 1 1.5 16Z" />
            </svg>
            <Pro>PRO</Pro>
          </Brand>
          {['Home', 'Trade', 'Markets', 'Analytics', 'Portfolio', 'Earn', 'History', 'Promos'].map(n => <NavLink key={n} name={n} active={n === 'Trade'} />)}
          <NavSpace />
          {['Help', 'More info', 'Collapse'].map(n => <NavLink key={n} name={n} />)}
        </Sidebar>
        <Content>
          <TopBar>
            <PairSearch aria-label="Search markets">
              <Search /><Coin dim /><PairName><b>BTC</b>/EUR</PairName><Chip>5x</Chip><Chip>Ctrl+K</Chip>
            </PairSearch>
            <PairActions>
              <PlainButton aria-label="Price alerts"><Bell /></PlainButton>
              <PlainButton aria-label="Remove from favorites"><StarIcon filled /></PlainButton>
            </PairActions>
            <Stats>
              <Stat><StatLabel>Last price</StatLabel><StatValue $tone={c.green}>91,527.7<small>EUR</small></StatValue></Stat>
              <Stat><StatLabel>Index price</StatLabel><StatValue>91,522.7<small>EUR</small></StatValue></Stat>
              <Stat><StatLabel>24h change</StatLabel><StatValue $tone={c.red}>-0.82%</StatValue></Stat>
              <Stat><StatLabel>24h volume</StatLabel><StatValue>215<small>BTC</small> 19.6M<small>EUR</small></StatValue></Stat>
              <Stat><StatLabel>Fees <Icon size={8} vb={8} w={1.2} d="M3 1l3 3-3 3" /></StatLabel><StatValue>0.20<small>% / </small>0.35<small>%</small></StatValue></Stat>
              <Stat><StatLabel>List date</StatLabel><StatValue>10/6/13</StatValue></Stat>
            </Stats>
            <TopActions>
              <TopButton $kind="icon" aria-label="Add widget"><Icon size={16} d="M8 15H3.5C2 15 1 14 1 12.5v-9C1 2 2 1 3.5 1h9C14 1 15 2 15 3.5V8M5.5 1v14M5.5 6.5H15M12.5 10v5M10 12.5h5" /></TopButton>
              <TopButton>My Layout<Chevron /></TopButton>
              <TopButton $kind="large"><Icon size={16} d="M8 1v10M4.5 7.5 8 11l3.5-3.5M2 14.5h12" />Deposit</TopButton>
              <TopButton $kind="balance"><b>54.89</b><small>USD</small></TopButton>
            </TopActions>
            <TopIcons>
              <PlainButton $bright aria-label="Apps"><Icon w={2.8} d="M2 2v0M8 2v0M14 2v0M2 8v0M8 8v0M14 8v0M2 14v0M8 14v0M14 14v0" /></PlainButton>
              <PlainButton $bright aria-label="Notifications"><Bell size={18} /></PlainButton>
              <PlainButton $bright aria-label="Account"><Icon d="M3 15c-.6 0-1-.5-.9-1.1.4-3 2.6-5 5.9-5s5.5 2 5.9 5c.1.6-.3 1.1-.9 1.1Z"><circle cx="8" cy="4.2" r="3.2" /></Icon></PlainButton>
            </TopIcons>
          </TopBar>
          <Workspace>
            <OrderForm />
            <OrderBook />
            <MarketChart />
            <History />
          </Workspace>
          <TickerBar>
            <Pills>
              <Pill $green><Dot />Online</Pill>
              <Pill><StarIcon />Favorites</Pill>
            </Pills>
            <Ticker href="#"><b>BTC</b>/EUR<span>-0.86%</span></Ticker>
            <Ticker href="#"><b>BTC</b>/USD<span>-0.84%</span></Ticker>
            <Ticker href="#" $up><b>ETH</b>/USD<span>0.10%</span></Ticker>
            <Ticker href="#"><b>BTC</b> Perp<span>-0.86%</span></Ticker>
            <FooterLinks>
              <FooterLink href="#">Share feedback</FooterLink>
              <FooterLink href="#"><Icon size={14} d="M5 4V1.5h10v8h-3M1 5h10.5v8H5l-2.5 2V13H1Z" />Chat with us</FooterLink>
            </FooterLinks>
          </TickerBar>
        </Content>
      </Upper>
      <Legal>
        <p>BCM, a Kraken company, provides services to clients in France. BCM is your legal counterparty and is registered as a Digital Asset Service Provider with the AMF.</p>
        <p>Investment services in relation to derivatives are provided by PEDSL-CY, which is authorised and regulated by the Cyprus Securities and Exchange Commission (CySEC). Trading services in relation to spot crypto assets are provided by other entities in partnership with or affiliated to the Kraken Group.</p>
      </Legal>
      <Backdrop>
        <Dialog role="dialog" aria-modal="true" aria-labelledby="confirm-title">
          <Coin size={40} badge />
          <DialogTitle id="confirm-title">Market buy</DialogTitle>
          <DialogAmount><b>≈0.00005465</b>BTC</DialogAmount>
          <DialogPrice>at market price ≈ 91,491.3<small>EUR</small></DialogPrice>
          <DialogRow>Total<DialogValue><b>5</b>EUR</DialogValue></DialogRow>
          <DialogRow>Est. trading fee<DialogValue><b>≈ 0.0175</b>EUR</DialogValue></DialogRow>
          <DialogCheck><Check type="checkbox" />Don't show this confirmation again.</DialogCheck>
          <DialogActions>
            <DialogButton>Cancel</DialogButton>
            <DialogButton $primary>Confirm</DialogButton>
          </DialogActions>
        </Dialog>
      </Backdrop>
    </>
  );
}
